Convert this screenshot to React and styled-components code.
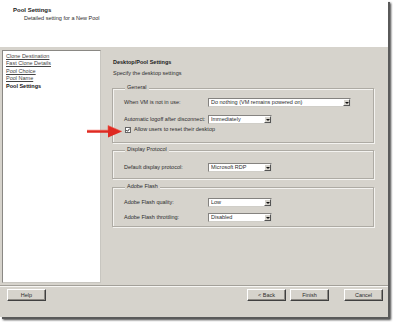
import React from "react";
import styled, { createGlobalStyle } from "styled-components";

const Global = createGlobalStyle`
	html, body {
		margin: 0;
		padding: 0;
		background: #ffffff;
	}
	body {
		font-family: "Liberation Sans", Arial, sans-serif;
		font-size: 5.5px;
		color: #2c2c2c;
	}
`;

const Page = styled.div`
	width: 393px;
	height: 322px;
	position: relative;
`;

const Window = styled.div`
	width: 388px;
	height: 317px;
	background: #d6d3cc;
	display: flex;
	flex-direction: column;
	box-shadow: 2px 2px 0 #5a5a5a, 3px 3px 2px rgba(0, 0, 0, 0.75);
`;

const Header = styled.div`
	height: 47px;
	box-sizing: border-box;
	background: #ffffff;
	padding: 6px 0 0 13px;
	line-height: 8px;
`;

const Title = styled.div`
	font-weight: 700;
	font-size: 6px;
	color: #1a1a1a;
`;

const Subtitle = styled.div`
	margin-left: 11px;
`;

const Middle = styled.div`
	height: 238px;
	display: flex;
`;

const Nav = styled.div`
	width: 99px;
	height: 233px;
	box-sizing: border-box;
	margin: 3px 0 0 2px;
	background: #ffffff;
	border: 1px solid #8a8884;
	border-right-color: #c8c6c0;
	border-bottom-color: #c8c6c0;
	padding: 2px 0 0 3px;
`;

const NavItem = styled.div`
	line-height: 7.4px;
	color: ${(p) => (p.$active ? "#111" : "#444")};
	font-weight: ${(p) => (p.$active ? 700 : 400)};
	text-decoration: ${(p) => (p.$active ? "none" : "underline")};
`;

const Content = styled.div`
	flex: 1;
	padding: 12px 0 0 11px;
	display: flex;
	flex-direction: column;
	align-items: flex-start;
`;

const Heading = styled.div`
	margin-left: 1px;
	font-weight: 700;
	line-height: 7px;
	color: #1a1a1a;
`;

const Note = styled.div`
	margin: 4px 0 0 1px;
	line-height: 7px;
`;

const GroupBox = styled.div`
	width: 262px;
	box-sizing: border-box;
	margin-top: ${(p) => p.$top}px;
	border: 1px solid #aeaba4;
	box-shadow: 1px 1px 0 #f4f3f0, inset 1px 1px 0 #f4f3f0;
	padding: 0 0 ${(p) => p.$bottom}px 11px;
`;

const Legend = styled.div`
	width: fit-content;
	margin: -5px 0 0 1px;
	padding: 0 2px;
	line-height: 7px;
	background: #d6d3cc;
`;

const Rows = styled.div`
	padding-top: ${(p) => p.$pad}px;
	display: flex;
	flex-direction: column;
`;

const Row = styled.div`
	height: 9px;
	display: flex;
	align-items: center;
	margin-top: ${(p) => p.$gap || 0}px;
`;

const Label = styled.div`
	width: 84px;
	line-height: 9px;
	white-space: nowrap;
`;

const Select = styled.div`
	width: ${(p) => p.$w}px;
	height: 9px;
	box-sizing: border-box;
	background: #ffffff;
	border: 1px solid #858380;
	border-right-color: #d0cec8;
	border-bottom-color: #d0cec8;
	display: flex;
	align-items: center;
	padding-left: 2px;
	line-height: 7px;
`;

const SelectText = styled.span`
	flex: 1;
	white-space: nowrap;
	overflow: hidden;
`;

const DropButton = styled.div`
	width: 7px;
	height: 7px;
	box-sizing: border-box;
	background: #d6d3cc;
	border: 1px solid #ffffff;
	border-right-color: #555;
	border-bottom-color: #555;
	display: flex;
	align-items: center;
	justify-content: center;

	&::after {
		content: "";
		border-left: 2px solid transparent;
		border-right: 2px solid transparent;
		border-top: 2px solid #111;
	}
`;

const CheckRow = styled.label`
	display: flex;
	align-items: center;
	height: 7px;
	margin-top: 2px;
	gap: 3px;
	line-height: 7px;
`;

const CheckBox = styled.span`
	width: 6px;
	height: 6px;
	box-sizing: border-box;
	background: #ffffff;
	border: 1px solid #666;
	display: flex;
	align-items: center;
	justify-content: center;
	margin-left: 1px;
`;

const Footer = styled.div`
	flex: 1;
	border-top: 1px solid #a3a099;
	box-shadow: inset 0 1px 0 #f7f6f3;
	padding: 3px 5px 0 7px;
	display: flex;
	align-items: flex-start;
`;

const Button = styled.div`
	width: 39px;
	height: 12px;
	box-sizing: border-box;
	margin-left: ${(p) => p.$ml || 0}px;
	border: 1px solid #ffffff;
	border-right-color: #404040;
	border-bottom-color: #404040;
	box-shadow: inset -1px -1px 0 #8d8a84;
	display: flex;
	align-items: center;
	justify-content: center;
	line-height: 8px;
`;

const Spacer = styled.div`
	flex: 1;
`;

const Arrow = styled.svg`
	position: absolute;
	left: 87px;
	top: 125px;
`;

function Dropdown({ width, value }) {
	return (
		<Select $w={width}>
			<SelectText>{value}</SelectText>
			<DropButton />
		</Select>
	);
}

const navItems = ["Clone Destination", "Fast Clone Details", "Pool Choice", "Pool Name"];

export default function App() {
	return (
		<Page>
			<Global />
			<Window>
				<Header>
					<Title>Pool Settings</Title>
					<Subtitle>Detailed setting for a New Pool</Subtitle>
				</Header>
				<Middle>
					<Nav>
						{navItems.map((item) => (
							<NavItem key={item}>{item}</NavItem>
						))}
						<NavItem $active>Pool Settings</NavItem>
					</Nav>
					<Content>
						<Heading>Desktop/Pool Settings</Heading>
						<Note>Specify the desktop settings</Note>

						<GroupBox $top={11} $bottom={9}>
							<Legend>General</Legend>
							<Rows $pad={7}>
								<Row>
									<Label>When VM is not in use:</Label>
									<Dropdown width={143} value="Do nothing (VM remains powered on)" />
								</Row>
								<Row $gap={8}>
									<Label>Automatic logoff after disconnect:</Label>
									<Dropdown width={64} value="Immediately" />
								</Row>
								<CheckRow>
									<CheckBox>
										<svg width="4" height="4" viewBox="0 0 4 4">
											<path d="M0.3 2 L1.5 3.3 L3.7 0.6" fill="none" stroke="#111" strokeWidth="0.9" />
										</svg>
									</CheckBox>
									Allow users to reset their desktop
								</CheckRow>
							</Rows>
						</GroupBox>

						<GroupBox $top={7} $bottom={6}>
							<Legend>Display Protocol</Legend>
							<Rows $pad={10}>
								<Row>
									<Label>Default display protocol:</Label>
									<Dropdown width={64} value="Microsoft RDP" />
								</Row>
							</Rows>
						</GroupBox>

						<GroupBox $top={8} $bottom={4}>
							<Legend>Adobe Flash</Legend>
							<Rows $pad={8}>
								<Row>
									<Label>Adobe Flash quality:</Label>
									<Dropdown width={64} value="Low" />
								</Row>
								<Row $gap={6}>
									<Label>Adobe Flash throttling:</Label>
									<Dropdown width={64} value="Disabled" />
								</Row>
							</Rows>
						</GroupBox>
					</Content>
				</Middle>
				<Footer>
					<Button>Help</Button>
					<Spacer />
					<Button>&lt; Back</Button>
					<Button $ml={4}>Finish</Button>
					<Button $ml={15}>Cancel</Button>
				</Footer>
			</Window>
			<Arrow width="36" height="13" viewBox="0 0 36 13">
				<path d="M0 5.2 H21 V0.5 L35 6.5 L21 12.5 V7.8 H0 Z" fill="#df2a22" />
				<path d="M0 5.2 H21 V0.5 L35 6.5" fill="none" stroke="#f05a4e" strokeWidth="0.6" />
			</Arrow>
		</Page>
	);
}
